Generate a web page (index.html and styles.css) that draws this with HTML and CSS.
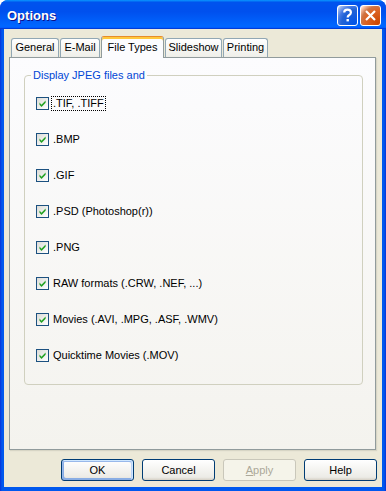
FILE: index.html
```html
<!DOCTYPE html>
<html>
<head>
<meta charset="utf-8">
<link rel="stylesheet" href="styles.css">
</head>
<body>
<div class="window">
  <div class="titlebar">
    <span class="title">Options</span>
    <div class="controls">
      <span class="ctl ctl-help"><svg width="19" height="19" viewBox="0 0 19 19"><path d="M6.2 6.6 C6.2 4.6 7.6 3.6 9.5 3.6 C11.5 3.6 12.9 4.7 12.9 6.5 C12.9 8.2 11.6 8.8 10.6 9.5 C10 9.9 9.7 10.4 9.7 11.4" fill="none" stroke="#fff" stroke-width="2.2"/><rect x="8.5" y="13" width="2.4" height="2.4" fill="#fff"/></svg></span>
      <span class="ctl ctl-close"><svg width="19" height="19" viewBox="0 0 19 19"><path d="M5 5 L14 14 M14 5 L5 14" stroke="#fff" stroke-width="2.2" fill="none"/></svg></span>
    </div>
  </div>
  <div class="client">
    <div class="tabs">
      <div class="tab tab-general">General</div>
      <div class="tab tab-email">E-Mail</div>
      <div class="tab tab-active">File Types</div>
      <div class="tab tab-slide">Slideshow</div>
      <div class="tab tab-print">Printing</div>
    </div>
    <div class="panel">
      <fieldset class="group">
        <legend class="legend">Display JPEG files and</legend>
        <div class="row"><span class="cb"><svg width="11" height="11" viewBox="0 0 11 11"><path d="M2.5 4.5 L4.5 6.8 L8.6 2.6 L8.6 4.8 L4.5 9 L2.5 6.7 Z" fill="#21a121"/></svg></span><span class="lbl focus">.TIF, .TIFF</span></div>
        <div class="row"><span class="cb"><svg width="11" height="11" viewBox="0 0 11 11"><path d="M2.5 4.5 L4.5 6.8 L8.6 2.6 L8.6 4.8 L4.5 9 L2.5 6.7 Z" fill="#21a121"/></svg></span><span class="lbl">.BMP</span></div>
        <div class="row"><span class="cb"><svg width="11" height="11" viewBox="0 0 11 11"><path d="M2.5 4.5 L4.5 6.8 L8.6 2.6 L8.6 4.8 L4.5 9 L2.5 6.7 Z" fill="#21a121"/></svg></span><span class="lbl">.GIF</span></div>
        <div class="row"><span class="cb"><svg width="11" height="11" viewBox="0 0 11 11"><path d="M2.5 4.5 L4.5 6.8 L8.6 2.6 L8.6 4.8 L4.5 9 L2.5 6.7 Z" fill="#21a121"/></svg></span><span class="lbl">.PSD (Photoshop(r))</span></div>
        <div class="row"><span class="cb"><svg width="11" height="11" viewBox="0 0 11 11"><path d="M2.5 4.5 L4.5 6.8 L8.6 2.6 L8.6 4.8 L4.5 9 L2.5 6.7 Z" fill="#21a121"/></svg></span><span class="lbl">.PNG</span></div>
        <div class="row"><span class="cb"><svg width="11" height="11" viewBox="0 0 11 11"><path d="M2.5 4.5 L4.5 6.8 L8.6 2.6 L8.6 4.8 L4.5 9 L2.5 6.7 Z" fill="#21a121"/></svg></span><span class="lbl">RAW formats (.CRW, .NEF, ...)</span></div>
        <div class="row"><span class="cb"><svg width="11" height="11" viewBox="0 0 11 11"><path d="M2.5 4.5 L4.5 6.8 L8.6 2.6 L8.6 4.8 L4.5 9 L2.5 6.7 Z" fill="#21a121"/></svg></span><span class="lbl">Movies (.AVI, .MPG, .ASF, .WMV)</span></div>
        <div class="row"><span class="cb"><svg width="11" height="11" viewBox="0 0 11 11"><path d="M2.5 4.5 L4.5 6.8 L8.6 2.6 L8.6 4.8 L4.5 9 L2.5 6.7 Z" fill="#21a121"/></svg></span><span class="lbl">Quicktime Movies (.MOV)</span></div>
      </fieldset>
    </div>
    <div class="buttons">
      <button class="btn btn-default">OK</button>
      <button class="btn">Cancel</button>
      <button class="btn btn-disabled"><u>A</u>pply</button>
      <button class="btn">Help</button>
    </div>
  </div>
</div>
</body>
</html>
```
FILE: styles.css
```css
html, body {
  margin: 0;
  padding: 0;
  background: #ffffff;
}
body {
  width: 386px;
  height: 491px;
  overflow: hidden;
  font-family: "Liberation Sans", Arial, sans-serif;
  font-size: 11px;
  color: #000;
}
.window {
  width: 386px;
  height: 491px;
  box-sizing: border-box;
  background: linear-gradient(90deg, #0831d9 0, #0058ee 2px, #0058ee 384px, #0831d9 386px);
  border-radius: 8px 8px 0 0;
  display: flex;
  flex-direction: column;
}
.titlebar {
  height: 29px;
  flex: none;
  display: flex;
  align-items: center;
  justify-content: space-between;
  padding: 0 5px 0 7px;
  border-radius: 8px 8px 0 0;
  background: linear-gradient(180deg, #0997ff, #0053ee 8%, #0050ee 40%, #0066ff 88%, #0066ff 93%, #005bff 95%, #003dd7 96%, #003dd7);
}
.title {
  color: #fff;
  font-weight: bold;
  font-size: 13px;
  letter-spacing: 0;
  text-shadow: 1px 1px #0f1089;
  margin-top: 1px;
}
.controls {
  display: flex;
  gap: 2px;
  margin-top: 2px;
}
.ctl {
  width: 19px;
  height: 19px;
  border: 1px solid #fff;
  border-radius: 3px;
  display: block;
}
.ctl svg { display: block; }
.ctl-help {
  background: radial-gradient(circle at 90% 90%, #0054e9 0, #2263d5 55%, #4479e4 70%, #a3bbec 90%, #fff 100%);
}
.ctl-close {
  background: radial-gradient(circle at 90% 90%, #cc4600 0, #dc6527 55%, #cd7546 70%, #ffccb2 90%, #fff 100%);
}
.client {
  flex: none;
  height: 458px;
  margin: 0 4px;
  background: #ece9d8;
  display: flex;
  flex-direction: column;
}
.tabs {
  display: flex;
  align-items: flex-end;
  height: 28px;
  padding-left: 7px;
  box-sizing: border-box;
}
.tab {
  height: 19px;
  box-sizing: border-box;
  border: 1px solid #91a7b4;
  border-bottom: none;
  border-radius: 3px 3px 0 0;
  background: linear-gradient(180deg, #fff, #fafaf9 26%, #f0f0ea 95%, #ecebe6);
  text-align: center;
  line-height: 17px;
  margin-right: 1px;
}
.tab-general { width: 48px; }
.tab-email { width: 40px; margin-right: 1px; }
.tab-active {
  width: 63px;
  height: 22px;
  line-height: 18px;
  background: #fcfcfe;
  border-color: #919b9c;
  border-top: 1px solid #e68b2c;
  box-shadow: inset 0 2px #ffc83c;
  position: relative;
  z-index: 1;
  margin-bottom: -1px;
  padding-top: 1px;
}
.tab-slide { width: 57px; }
.tab-print { width: 45px; }
.panel {
  height: 393px;
  box-sizing: border-box;
  margin: 0 6px 0 5px;
  border: 1px solid #919b9c;
  background: linear-gradient(180deg, #fcfcfe, #f4f3ee);
  box-shadow: 1px 1px 1px 0 rgba(208, 206, 191, 0.75);
  padding: 11px 12px 0 14px;
}
.group {
  margin: 0;
  border: 1px solid #d0d0bf;
  border-radius: 4px;
  padding: 3px 11px 11px 11px;
  min-width: 0;
}
.legend {
  color: #0046d5;
  padding: 0 2px;
  margin-left: -5px;
  line-height: 13px;
}
.row {
  height: 36px;
  display: flex;
  align-items: center;
}
.cb {
  width: 11px;
  height: 11px;
  border: 1px solid #1c5180;
  background: linear-gradient(135deg, #dcdcd7, #fff);
  flex: none;
}
.cb svg { display: block; }
.lbl {
  margin-left: 3px;
  padding: 0 1px;
  line-height: 13px;
  white-space: nowrap;
}
.focus {
  outline: 1px dotted #000;
  outline-offset: 0;
}
.buttons {
  display: flex;
  justify-content: flex-end;
  gap: 8px;
  margin-top: 9px;
  padding-right: 5px;
}
.btn {
  width: 73px;
  height: 22px;
  box-sizing: border-box;
  font-family: "Liberation Sans", Arial, sans-serif;
  font-size: 11px;
  color: #000;
  border: 1px solid #003c74;
  border-radius: 3px;
  background: linear-gradient(180deg, #fff, #ecebe6 86%, #d6d0c5);
  padding: 0;
}
.btn-default {
  box-shadow: inset -1px 1px #cee7ff, inset 1px 2px #98b8ea, inset -2px 2px #bcd4f6, inset 1px -1px #89ade4, inset 2px -2px #89ade4;
}
.btn-disabled {
  color: #aca899;
  border-color: #c9c7ba;
  background: #f5f4ea;
}
.btn-disabled u { text-decoration: underline; }
```
